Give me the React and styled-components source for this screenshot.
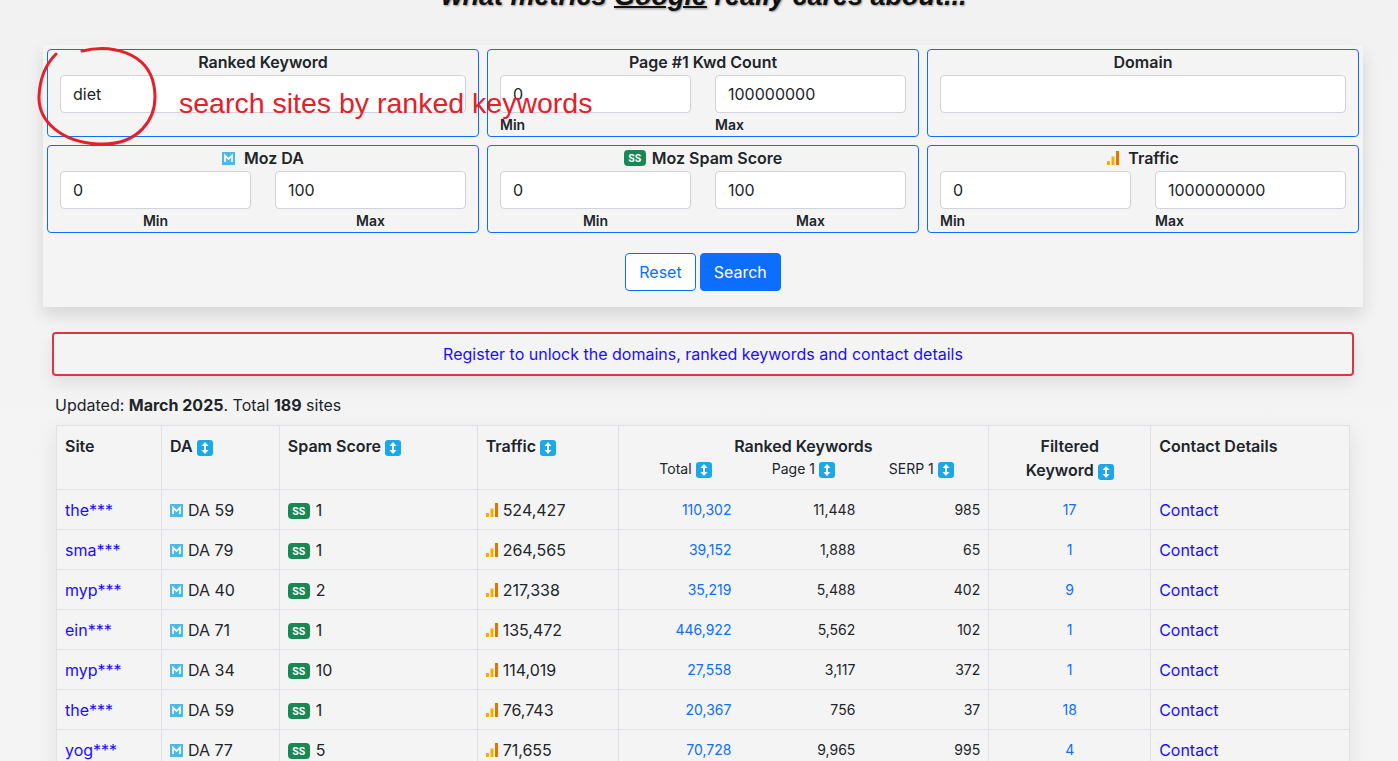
import React from "react";
import styled, { createGlobalStyle } from "styled-components";

const Global = createGlobalStyle`
  html, body { margin: 0; padding: 0; }
  body { background: linear-gradient(#f2f2f2, #f4f4f4); font-family: Inter, "Noto Sans", sans-serif; color: #212529; overflow: hidden; }
`;

const Page = styled.div`width: 1398px; height: 761px; overflow: hidden; position: relative;`;
const Title = styled.h1`
  margin: -19px 0 0 10px; height: 40px; text-align: center; font: italic bold 27px "Liberation Sans", Arial, sans-serif;
  color: #111; text-shadow: 1px 1px 2px rgba(0,0,0,.4);
  u { text-decoration-thickness: 2px; }
`;
const Card = styled.div`
  margin: 24px 35px 0 43px; background: #f4f4f4; padding: 4px 4px 16px;
  box-shadow: 0 8px 16px rgba(0,0,0,.12);
`;
const Grid = styled.div`display: grid; grid-template-columns: repeat(3, 1fr); gap: 8px;`;
const Group = styled.div`
  border: 1px solid #0d6efd; border-radius: 4px; height: 88px; box-sizing: border-box; padding: 2px 12px 0;
  position: relative;
`;
const GLabel = styled.div`text-align: center; font-weight: 600; font-size: 16px; line-height: 20px; display: flex; justify-content: center; align-items: center; gap: 4px;`;
const Pair = styled.div`display: grid; grid-template-columns: ${p => p.$one ? "1fr" : "1fr 1fr"}; gap: 24px; margin-top: 3px;`;
const Field = styled.div``;
const Input = styled.div`
  height: 38px; box-sizing: border-box; border: 1px solid #ced4da; border-radius: 4px; background: #fff;
  padding: 0 12px; display: flex; align-items: center; font-size: 16px; color: #212529;
`;
const Sub = styled.div`font-weight: 600; font-size: 14px; line-height: 17px; margin-top: 3px; text-align: ${p => p.$center ? "center" : "left"};`;
const Note = styled.div`
  position: absolute; left: 131px; top: 37px; color: #e4202a; font: 28.5px "Liberation Sans", Arial, sans-serif; white-space: nowrap; z-index: 2;
`;
const Circle = styled.svg`position: absolute; left: -12px; top: -4px; z-index: 2;`;
const Buttons = styled.div`display: flex; justify-content: center; gap: 4px; margin-top: 20px;`;
const Btn = styled.button`
  height: 38px; padding: 0 13px; border-radius: 4px; font: 16px Inter, sans-serif; cursor: pointer;
  border: 1px solid #0d6efd; background: ${p => p.$primary ? "#0d6efd" : "#fff"}; color: ${p => p.$primary ? "#fff" : "#0d6efd"};
`;
const Alert = styled.div`
  margin: 25px 44px 0 52px; height: 44px; box-sizing: border-box; border: 2px solid #dc3545; border-radius: 4px;
  display: flex; align-items: center; justify-content: center; color: #1a0dff; font-size: 16px; background: #f4f4f4;
  box-shadow: 0 8px 16px rgba(0,0,0,.08);
`;
const Updated = styled.div`margin: 19px 0 0 55px; font-size: 16px; line-height: 20px;`;
const Table = styled.table`
  margin: 10px 0 0 56px; width: 1294px; border-collapse: collapse; font-size: 16px; background: #f4f4f4;
  box-shadow: 0 8px 20px rgba(0,0,0,.08);
  th, td { border: 1px solid #dee2e6; padding: 0 8px; }
  th { font-weight: 600; text-align: left; vertical-align: top; height: 64px; padding-top: 10px; box-sizing: border-box; }
  td { height: 40px; box-sizing: border-box; }
`;
const Sort = styled.span`
  display: inline-flex; width: 16px; height: 16px; background: #1ba8e8; border-radius: 3px;
  vertical-align: -2px; margin-left: 4px; align-items: center; justify-content: center;
`;
const SubHead = styled.div`display: grid; grid-template-columns: 1fr 1fr 1fr; font-weight: 400; font-size: 14px; margin-top: 4px; text-align: center;`;
const Blue = styled.span`color: ${p => p.$c || "#1a0dff"};`;
const Nums = styled.div`
  display: grid; grid-template-columns: 1fr 1fr 1fr; font-size: 14px; text-align: right;
  span:nth-child(1) { padding-right: 13px; }
  span:nth-child(2) { padding-right: 7px; }
`;
const SS = styled.span`
  display: inline-flex; align-items: center; justify-content: center; background: #198754; color: #fff; font-size: 10px; font-weight: 700;
  width: 22px; height: 16px; border-radius: 4px; margin-right: 6px; vertical-align: 1px;
`;

const SortIcon = () => (
  <Sort><svg width="8" height="12" viewBox="0 0 8 12"><path d="M4 0L7.5 4H5v4h2.5L4 12 .5 8H3V4H.5z" fill="#fff"/></svg></Sort>
);
const Moz = ({ s = 13 }) => (
  <svg width={s} height={s} viewBox="0 0 13 13" style={{ marginRight: 5, verticalAlign: -1 }}>
    <rect width="13" height="13" fill="#4fb8e8" />
    <path d="M3 10V3.5L6.5 7 10 3.5V10" stroke="#fff" strokeWidth="1.6" fill="none" />
  </svg>
);
const Bars = () => (
  <svg width="12" height="14" viewBox="0 0 12 14" style={{ marginRight: 5, verticalAlign: -1 }}>
    <rect x="0" y="10" width="3" height="4" fill="#f9ab00" />
    <rect x="4.5" y="5.5" width="3" height="8.5" fill="#f9ab00" />
    <rect x="9" y="0" width="3" height="14" fill="#e37400" />
  </svg>
);

const rows = [
  ["the***", 59, 1, "524,427", "110,302", "11,448", "985", "17"],
  ["sma***", 79, 1, "264,565", "39,152", "1,888", "65", "1"],
  ["myp***", 40, 2, "217,338", "35,219", "5,488", "402", "9"],
  ["ein***", 71, 1, "135,472", "446,922", "5,562", "102", "1"],
  ["myp***", 34, 10, "114,019", "27,558", "3,117", "372", "1"],
  ["the***", 59, 1, "76,743", "20,367", "756", "37", "18"],
  ["yog***", 77, 5, "71,655", "70,728", "9,965", "995", "4"],
];

function MinMax({ min, max, center }) {
  return (
    <Pair>
      <Field><Input>{min}</Input><Sub $center={center}>Min</Sub></Field>
      <Field><Input>{max}</Input><Sub $center={center}>Max</Sub></Field>
    </Pair>
  );
}

export default function App() {
  return (
    <Page>
      <Global />
      <Title>what metrics <u>Google</u> really cares about...</Title>
      <Card>
        <Grid>
          <Group>
            <GLabel>Ranked Keyword</GLabel>
            <Pair $one><Input>diet</Input></Pair>
            <Note>search sites by ranked keywords</Note>
            <Circle width="140" height="104" viewBox="0 0 140 104">
              <path d="M46 5 C75 -2 112 6 118 40 C124 75 100 100 62 98 C25 96 2 75 3 50 C4 30 10 18 20 8" stroke="#e4202a" strokeWidth="3" fill="none" strokeLinecap="round" />
            </Circle>
          </Group>
          <Group>
            <GLabel>Page #1 Kwd Count</GLabel>
            <MinMax min="0" max="100000000" />
          </Group>
          <Group>
            <GLabel>Domain</GLabel>
            <Pair $one><Input /></Pair>
          </Group>
          <Group>
            <GLabel><Moz />Moz DA</GLabel>
            <MinMax min="0" max="100" center />
          </Group>
          <Group>
            <GLabel><SS style={{ marginRight: 2 }}>SS</SS>Moz Spam Score</GLabel>
            <MinMax min="0" max="100" center />
          </Group>
          <Group>
            <GLabel><Bars />Traffic</GLabel>
            <MinMax min="0" max="1000000000" />
          </Group>
        </Grid>
        <Buttons>
          <Btn>Reset</Btn>
          <Btn $primary>Search</Btn>
        </Buttons>
      </Card>
      <Alert>Register to unlock the domains, ranked keywords and contact details</Alert>
      <Updated>Updated: <b>March 2025</b>. Total <b>189</b> sites</Updated>
      <Table>
        <colgroup>
          <col style={{ width: 105 }} /><col style={{ width: 118 }} /><col style={{ width: 198 }} /><col style={{ width: 141 }} />
          <col style={{ width: 371 }} /><col style={{ width: 162 }} /><col style={{ width: 199 }} />
        </colgroup>
        <thead>
          <tr>
            <th>Site</th>
            <th>DA<SortIcon /></th>
            <th>Spam Score<SortIcon /></th>
            <th>Traffic<SortIcon /></th>
            <th style={{ textAlign: "center" }}>Ranked Keywords
              <SubHead><span>Total<SortIcon /></span><span>Page 1<SortIcon /></span><span>SERP 1<SortIcon /></span></SubHead>
            </th>
            <th style={{ textAlign: "center", lineHeight: "24px", paddingTop: 8 }}>Filtered<br />Keyword<SortIcon /></th>
            <th>Contact Details</th>
          </tr>
        </thead>
        <tbody>
          {rows.map((r, i) => (
            <tr key={i}>
              <td><Blue>{r[0]}</Blue></td>
              <td><Moz />DA {r[1]}</td>
              <td><SS>SS</SS>{r[2]}</td>
              <td><Bars />{r[3]}</td>
              <td>
                <Nums>
                  <Blue $c="#0d6efd">{r[4]}</Blue>
                  <span>{r[5]}</span>
                  <span>{r[6]}</span>
                </Nums>
              </td>
              <td style={{ textAlign: "center", fontSize: 14 }}><Blue $c="#0d6efd">{r[7]}</Blue></td>
              <td><Blue>Contact</Blue></td>
            </tr>
          ))}
        </tbody>
      </Table>
    </Page>
  );
}
